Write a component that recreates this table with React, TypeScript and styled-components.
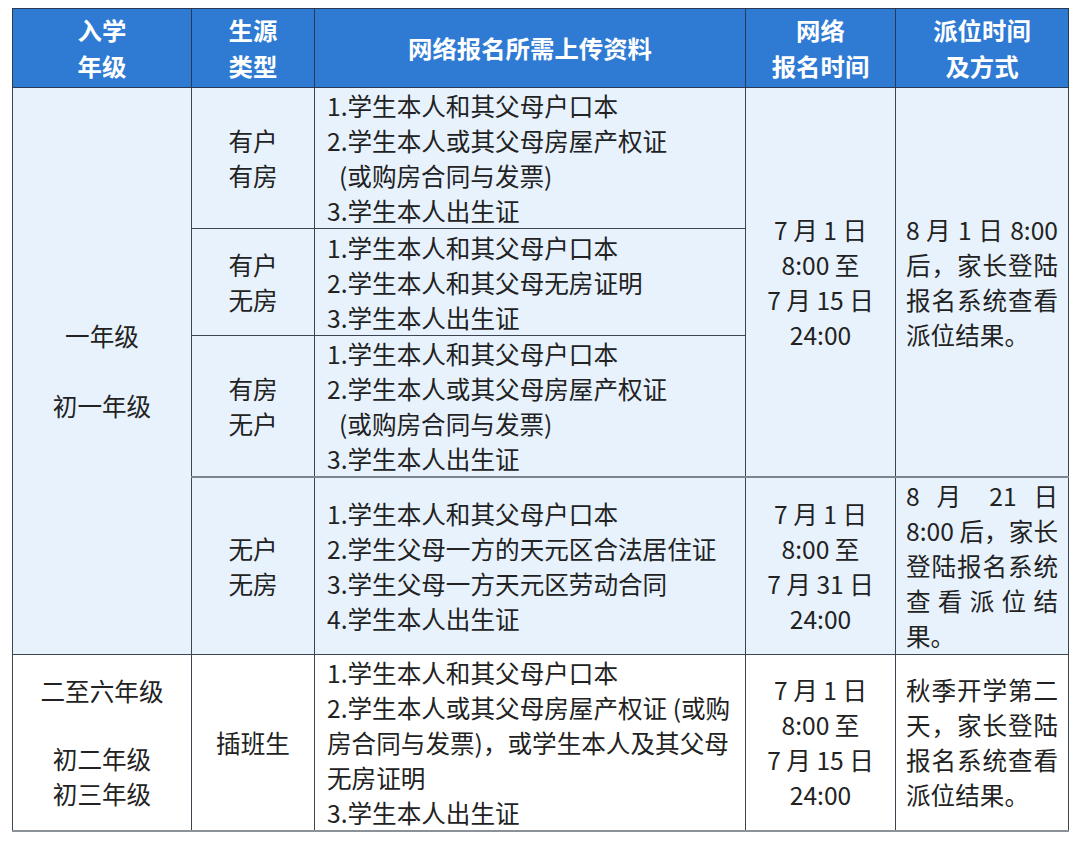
import React from "react";
import styled, { createGlobalStyle } from "styled-components";

const GlobalStyle = createGlobalStyle`
	html, body {
		margin: 0;
		padding: 0;
		background: #fff;
	}

	body {
		font-family: "Noto Sans CJK SC", "Noto Sans", sans-serif;
		color: #222;
	}
`;

const Page = styled.div`
	padding: 8px 12px;
`;

const Table = styled.table`
	width: 1056px;
	table-layout: fixed;
	border-collapse: collapse;
	font-size: 24.6px;
	line-height: 35px;
	border-bottom: 2px solid #8a9199;
`;

const HeadCell = styled.th`
	background: #2f7bd4;
	color: #fff;
	font-weight: 700;
	font-size: 24.4px;
	line-height: 36px;
	text-align: center;
	vertical-align: middle;
	border: 1px solid #2a3a55;
	padding: 0;
`;

const Cell = styled.td<{ $align?: "left" | "center"; $shaded?: boolean; $pad?: number }>`
	background: ${(p) => (p.$shaded ? "#e8f2fd" : "#fff")};
	text-align: ${(p) => p.$align || "center"};
	vertical-align: middle;
	border: 1px solid #3d4650;
	padding: 0 ${(p) => p.$pad ?? 0}px;
	white-space: nowrap;
`;

const Row = styled.tr<{ $h: number; $heavyTop?: boolean }>`
	height: ${(p) => p.$h}px;

	& > td {
		${(p) => (p.$heavyTop ? "border-top: 2px solid #7d868f;" : "")}
	}
`;

const Line = styled.div<{ $justify?: boolean; $indent?: number }>`
	padding-left: ${(p) => p.$indent || 0}px;
	${(p) =>
		p.$justify &&
		`
		text-align: justify;
		text-align-last: justify;
	`}
`;

const Spacer = styled.div<{ $h?: number }>`
	height: ${(p) => p.$h || 35}px;
`;

const Lines: React.FC<{ items: string[]; justify?: number[] }> = ({ items, justify = [] }) => (
	<>
		{items.map((t, i) => (
			<Line key={i} $justify={justify.includes(i)} $indent={t.startsWith("(") ? 12 : 0}>
				{t}
			</Line>
		))}
	</>
);

const withDeed = [
	"1.学生本人和其父母户口本",
	"2.学生本人或其父母房屋产权证",
	"(或购房合同与发票)",
	"3.学生本人出生证"
];

export default function App() {
	return (
		<Page>
			<GlobalStyle />
			<Table>
				<colgroup>
					<col style={{ width: 179 }} />
					<col style={{ width: 123 }} />
					<col style={{ width: 431 }} />
					<col style={{ width: 150 }} />
					<col style={{ width: 173 }} />
				</colgroup>
				<thead>
					<Row $h={79}>
						<HeadCell>
							入学
							<br />
							年级
						</HeadCell>
						<HeadCell>
							生源
							<br />
							类型
						</HeadCell>
						<HeadCell>网络报名所需上传资料</HeadCell>
						<HeadCell>
							网络
							<br />
							报名时间
						</HeadCell>
						<HeadCell>
							派位时间
							<br />
							及方式
						</HeadCell>
					</Row>
				</thead>
				<tbody>
					<Row $h={141}>
						<Cell $shaded rowSpan={4}>
							<Line>一年级</Line>
							<Spacer />
							<Line>初一年级</Line>
						</Cell>
						<Cell $shaded>
							<Lines items={["有户", "有房"]} />
						</Cell>
						<Cell $shaded $align="left" $pad={12}>
							<Lines items={withDeed} />
						</Cell>
						<Cell $shaded rowSpan={3}>
							<Lines items={["7 月 1 日", "8:00 至", "7 月 15 日", "24:00"]} />
						</Cell>
						<Cell $shaded rowSpan={3} $align="left" $pad={10}>
							<Lines
								items={["8 月 1 日 8:00", "后，家长登陆", "报名系统查看", "派位结果。"]}
								justify={[0, 1, 2]}
							/>
						</Cell>
					</Row>
					<Row $h={107}>
						<Cell $shaded>
							<Lines items={["有户", "无房"]} />
						</Cell>
						<Cell $shaded $align="left" $pad={12}>
							<Lines
								items={["1.学生本人和其父母户口本", "2.学生本人和其父母无房证明", "3.学生本人出生证"]}
							/>
						</Cell>
					</Row>
					<Row $h={140}>
						<Cell $shaded>
							<Lines items={["有房", "无户"]} />
						</Cell>
						<Cell $shaded $align="left" $pad={12}>
							<Lines items={withDeed} />
						</Cell>
					</Row>
					<Row $h={177} $heavyTop>
						<Cell $shaded>
							<Lines items={["无户", "无房"]} />
						</Cell>
						<Cell $shaded $align="left" $pad={12}>
							<Lines
								items={[
									"1.学生本人和其父母户口本",
									"2.学生父母一方的天元区合法居住证",
									"3.学生父母一方天元区劳动合同",
									"4.学生本人出生证"
								]}
							/>
						</Cell>
						<Cell $shaded>
							<Lines items={["7 月 1 日", "8:00 至", "7 月 31 日", "24:00"]} />
						</Cell>
						<Cell $shaded $align="left" $pad={10}>
							<Lines
								items={["8 月 21 日", "8:00 后，家长", "登陆报名系统", "查 看 派 位 结", "果。"]}
								justify={[0, 1, 2, 3]}
							/>
						</Cell>
					</Row>
					<Row $h={177}>
						<Cell>
							<Line>二至六年级</Line>
							<Spacer $h={33} />
							<Line>初二年级</Line>
							<Line>初三年级</Line>
						</Cell>
						<Cell>
							<Line>插班生</Line>
						</Cell>
						<Cell $align="left" $pad={12}>
							<Lines
								items={[
									"1.学生本人和其父母户口本",
									"2.学生本人或其父母房屋产权证 (或购",
									"房合同与发票)，或学生本人及其父母",
									"无房证明",
									"3.学生本人出生证"
								]}
							/>
						</Cell>
						<Cell>
							<Lines items={["7 月 1 日", "8:00 至", "7 月 15 日", "24:00"]} />
						</Cell>
						<Cell $align="left" $pad={10}>
							<Lines
								items={["秋季开学第二", "天，家长登陆", "报名系统查看", "派位结果。"]}
								justify={[0, 1, 2]}
							/>
						</Cell>
					</Row>
				</tbody>
			</Table>
		</Page>
	);
}
